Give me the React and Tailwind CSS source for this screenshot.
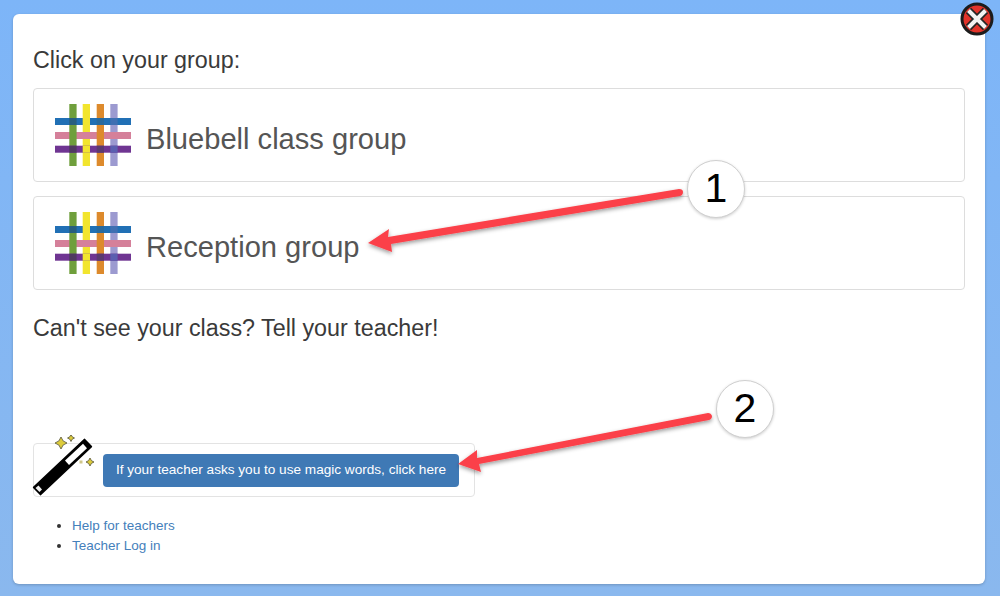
import React from 'react';

const FONT = "font-['Liberation_Sans',Arial,sans-serif]";

// Woven logo: each strand is drawn in pieces so that it can go over and under
const WeaveLogo = () => (
  <svg width="78" height="64" viewBox="0 0 78 64" className="ml-[0.5px] mt-[2px] shrink-0 blur-[0.4px]">
    {/* vertical strands */}
    <rect x="14.3" y="0" width="7.3" height="62" fill="#6f9f3c" />
    <rect x="27.7" y="0" width="7.3" height="62" fill="#f2e52e" />
    <rect x="41.7" y="0" width="7.3" height="62" fill="#dd8a2c" />
    <rect x="55.3" y="0" width="7.3" height="62" fill="#9c9ad0" />
    {/* horizontal strands */}
    <rect x="0" y="14" width="76" height="7" fill="#2170b5" />
    <rect x="0" y="28" width="76" height="7" fill="#d5809a" />
    <rect x="0" y="41.7" width="76" height="7" fill="#6f3592" />
    {/* crossings where the vertical strand lies on top */}
    <rect x="27.7" y="14" width="7.3" height="7" fill="#f2e52e" />
    <rect x="14.3" y="28" width="7.3" height="7" fill="#6f9f3c" />
    <rect x="41.7" y="28" width="7.3" height="7" fill="#dd8a2c" />
    <rect x="27.7" y="41.7" width="7.3" height="7" fill="#f2e52e" />
    <rect x="55.3" y="41.7" width="7.3" height="7" fill="#5a5fb0" />
    {/* dark crossings where the horizontal strand lies on top */}
    <rect x="14.3" y="14" width="7.3" height="7" fill="#285f7e" />
    <rect x="41.7" y="14" width="7.3" height="7" fill="#2a6a9c" />
    <rect x="55.3" y="14" width="7.3" height="7" fill="#3f6fb2" />
    <rect x="14.3" y="41.7" width="7.3" height="7" fill="#4f3a60" />
    <rect x="41.7" y="41.7" width="7.3" height="7" fill="#5b3a70" />
  </svg>
);

const GroupPanel = ({ name }) => (
  <div className="flex h-[94px] items-center rounded-[4px] border border-[#dddddd] bg-white pl-[20px]">
    <WeaveLogo />
    <span className="ml-[13.5px] mt-[10px] text-[29.1px] leading-none text-[#555555]">{name}</span>
  </div>
);

const Sparkle = ({ x, y, r }) => (
  <path
    d={`M${x} ${y - r} L${x + r * 0.35} ${y - r * 0.35} L${x + r} ${y} L${x + r * 0.35} ${y + r * 0.35} L${x} ${y + r} L${x - r * 0.35} ${y + r * 0.35} L${x - r} ${y} L${x - r * 0.35} ${y - r * 0.35} Z`}
    fill="#dccb3c"
    stroke="#55533a"
    strokeWidth="0.8"
  />
);

const MagicWand = () => (
  <svg width="66" height="62" viewBox="0 0 66 62" className="absolute left-[-3px] top-[-9px]">
    <path d="M2.6 52.4 L53.6 4.4 L60.4 11.6 L9.4 59.6 Z" fill="#000" stroke="#000" strokeWidth="1.5" strokeLinejoin="round" />
    <path d="M34 25.6 L52 8.8 L56 13.2 L38 30 Z" fill="#fff" />
    <path d="M4.5 53 L7.5 50.5 L11 54.5 L8.5 57 Z" fill="#eeeeee" />
    <Sparkle x={30} y={8} r={6} />
    <Sparkle x={40} y={3} r={3.5} />
    <Sparkle x={59} y={27} r={4} />
    <rect x="48.5" y="25.5" width="3" height="3" fill="#cfc68a" />
  </svg>
);

const CloseButton = () => (
  <svg width="34" height="34" viewBox="0 0 34 34" className="absolute left-[960px] top-[2px]">
    <circle cx="17" cy="17" r="15" fill="#e2332a" stroke="#1c1c1c" strokeWidth="3" />
    <path d="M8.5 8.5 L25.5 25.5 M25.5 8.5 L8.5 25.5" stroke="#262626" strokeWidth="7.5" />
    <path d="M8.5 8.5 L25.5 25.5 M25.5 8.5 L8.5 25.5" stroke="#f2f2f2" strokeWidth="4" />
  </svg>
);

const Arrows = () => (
  <svg width="1000" height="596" viewBox="0 0 1000 596" className="pointer-events-none absolute left-0 top-0">
    <defs>
      <filter id="arrowShadow" x="-10%" y="-30%" width="120%" height="160%">
        <feDropShadow dx="0" dy="2" stdDeviation="2" floodColor="#000" floodOpacity="0.4" />
      </filter>
    </defs>
    <g fill="#fb4149" filter="url(#arrowShadow)">
      <path d="M368 243 L389 229 L388 237 L679 189 Q683 189 683 192 Q683 195 680 196 L391 244 L392 252 Z" />
      <path d="M458 464 L477 450 L477 458 L708 413 Q711 413 712 416 Q712 419 709 420 L479 464 L481 472 Z" />
    </g>
  </svg>
);

const Badge = ({ n, className }) => (
  <div
    className={`absolute flex h-[58px] w-[58px] items-center justify-center rounded-full border border-[#d0d0d0] bg-white text-[41px] text-black shadow-[0_1px_3px_rgba(0,0,0,0.2)] ${className}`}
  >
    {n}
  </div>
);

export default function App() {
  return (
    <div className={`relative h-[596px] w-[1000px] overflow-hidden bg-linear-to-b from-[#7db5f8] to-[#8ab8ee] ${FONT}`}>
      <div className="h-[14px]" />
      <div className="ml-[13px] h-[570px] w-[972px] rounded-[6px] bg-white px-[20px] pt-[33px] shadow-[0_1px_3px_rgba(0,0,0,0.2)]">
        <h3 className="text-[23.3px] leading-[26px] text-[#3a3a3a]">Click on your group:</h3>
        <div className="mt-[15px] flex flex-col gap-[14px]">
          <GroupPanel name="Bluebell class group" />
          <GroupPanel name="Reception group" />
        </div>
        <p className="mt-[25px] text-[23.3px] leading-[26px] text-[#3a3a3a]">Can't see your class? Tell your teacher!</p>

        <div className="relative mt-[102px] flex h-[54px] w-[442px] items-center rounded-[4px] border border-[#e3e3e3] bg-white pl-[69px]">
          <MagicWand />
          <button className="h-[33px] w-[356px] rounded-[4px] bg-[#3f79b5] pb-[2px] text-center text-[13.6px] leading-[31px] text-white">
            If your teacher asks you to use magic words, click here
          </button>
        </div>

        <ul className="mt-[19px] list-disc pl-[39px] text-[13.5px] leading-[19.5px] text-[#333333]">
          <li><a className="text-[#4480bb]">Help for teachers</a></li>
          <li><a className="text-[#4480bb]">Teacher Log in</a></li>
        </ul>
      </div>

      <CloseButton />
      <Arrows />
      <Badge n="1" className="left-[687px] top-[160px]" />
      <Badge n="2" className="left-[716px] top-[380px]" />
    </div>
  );
}
